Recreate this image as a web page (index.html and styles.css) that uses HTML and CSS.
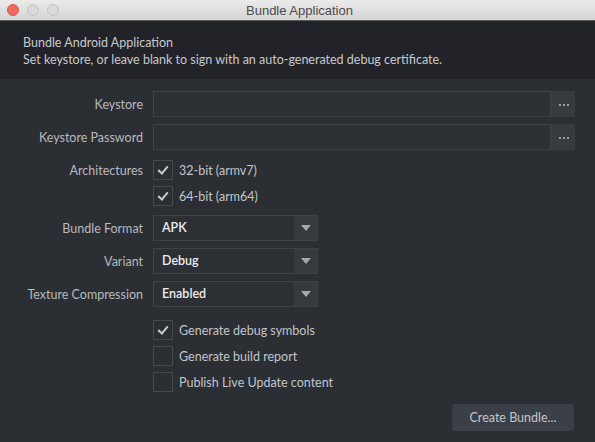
FILE: index.html
```html
<!DOCTYPE html>
<html lang="en">
<head>
    <meta charset="UTF-8">
    <meta name="viewport" content="width=device-width, initial-scale=1.0">
    <title>Bundle Application</title>
    <link rel="stylesheet" href="styles.css">
</head>
<body>

    <div class="window">
        <!-- Title bar -->
        <div class="titlebar">
            <div class="lights">
                <span class="light close"></span>
                <span class="light"></span>
                <span class="light"></span>
            </div>
            <div class="title">Bundle Application</div>
        </div>

        <!-- Header -->
        <div class="header">
            <div>Bundle Android Application</div>
            <div>Set keystore, or leave blank to sign with an auto-generated debug certificate.</div>
        </div>

        <!-- Form -->
        <div class="form">
            <div class="row">
                <label class="label">Keystore</label>
                <div class="file-field">
                    <input type="text" class="text-input">
                    <button class="browse"><i></i><i></i><i></i></button>
                </div>
            </div>
            <div class="row gap7">
                <label class="label">Keystore Password</label>
                <div class="file-field">
                    <input type="text" class="text-input">
                    <button class="browse"><i></i><i></i><i></i></button>
                </div>
            </div>

            <div class="row check-row gap10">
                <label class="label">Architectures</label>
                <div class="check"><span class="box checked"></span>32-bit (armv7)</div>
            </div>
            <div class="row check-row gap6">
                <label class="label"></label>
                <div class="check"><span class="box checked"></span>64-bit (arm64)</div>
            </div>

            <div class="row gap9">
                <label class="label">Bundle Format</label>
                <div class="select"><span class="value">APK</span><span class="arrow"></span></div>
            </div>
            <div class="row gap7">
                <label class="label">Variant</label>
                <div class="select"><span class="value">Debug</span><span class="arrow"></span></div>
            </div>
            <div class="row gap7">
                <label class="label">Texture Compression</label>
                <div class="select"><span class="value">Enabled</span><span class="arrow"></span></div>
            </div>

            <div class="row check-row gap13">
                <label class="label"></label>
                <div class="check"><span class="box checked"></span>Generate debug symbols</div>
            </div>
            <div class="row check-row gap6">
                <label class="label"></label>
                <div class="check"><span class="box"></span>Generate build report</div>
            </div>
            <div class="row check-row gap6">
                <label class="label"></label>
                <div class="check"><span class="box"></span>Publish Live Update content</div>
            </div>

            <div class="actions">
                <button class="create-button">Create Bundle...</button>
            </div>
        </div>
    </div>

</body>
</html>
```

FILE: styles.css
```css
body {
    margin: 0;
    font-family: Lato, "Open Sans", sans-serif;
    background: #2b2e33;
}
.window {
    width: 595px;
    height: 442px;
    background: #2b2e33;
    overflow: hidden;
}

/* title bar */
.titlebar {
    height: 20px;
    display: flex;
    align-items: center;
    justify-content: center;
    position: relative;
    background: linear-gradient(to bottom, #ebebeb, #d5d5d5);
    border-bottom: 1px solid #5a5a5a;
}
.lights {
    position: absolute;
    left: 7px;
    top: 4px;
    display: flex;
    gap: 8px;
}
.light {
    width: 10px;
    height: 10px;
    border-radius: 50%;
    background: #d9d9d9;
    border: 1px solid #c4c4c4;
}
.light.close {
    background: #ec6a5e;
    border-color: #d9574b;
}
.title {
    font-family: "Liberation Sans", Arial, sans-serif;
    font-size: 13px;
    color: #4a4a4a;
    padding-left: 4px;
}

/* header */
.header {
    height: 58px;
    box-sizing: border-box;
    padding: 13px 23px 0;
    background: #212328;
    color: #c6c9cd;
    font-size: 12.5px;
    line-height: 17px;
}

/* form */
.form {
    padding: 12px 20px 0 0;
}
.row {
    display: flex;
    align-items: center;
    height: 26px;
}
.check-row {
    height: 20px;
}
.gap6 { margin-top: 6px; }
.gap7 { margin-top: 7px; }
.gap9 { margin-top: 9px; }
.gap10 { margin-top: 10px; }
.gap13 { margin-top: 13px; }

.label {
    width: 143px;
    flex-shrink: 0;
    margin-right: 10px;
    text-align: right;
    color: #b7babe;
    font-size: 12.5px;
}

.file-field {
    flex: 1;
    display: flex;
    height: 26px;
}
.text-input {
    flex: 1;
    box-sizing: border-box;
    height: 26px;
    margin: 0;
    background: #2c2f34;
    border: 1px solid #404349;
    border-bottom-color: #3a3d42;
    outline: none;
}
.browse {
    width: 24px;
    height: 26px;
    padding: 0 0 0 1px;
    border: none;
    background: #373a3f;
    display: flex;
    align-items: center;
    justify-content: center;
    gap: 2px;
}
.browse i {
    width: 2px;
    height: 2px;
    background: #9a9da1;
    margin-top: 2px;
}

.select {
    width: 165px;
    height: 26px;
    box-sizing: border-box;
    display: flex;
    background: #2c2f34;
    border: 1px solid #3e4146;
}
.select .value {
    flex: 1;
    padding-left: 8px;
    line-height: 24px;
    color: #ececec;
    font-size: 12.5px;
    font-weight: 600;
}
.select .arrow {
    width: 23px;
    background: #363a3f;
    display: flex;
    align-items: center;
    justify-content: center;
}
.select .arrow::after {
    content: "";
    border-left: 5px solid transparent;
    border-right: 5px solid transparent;
    border-top: 6px solid #a4a7ab;
}

.check {
    display: flex;
    align-items: center;
    color: #c2c5c9;
    font-size: 12.5px;
}
.box {
    width: 20px;
    height: 20px;
    box-sizing: border-box;
    border: 1px solid #45484d;
    margin-right: 6px;
    position: relative;
}
.box.checked::after {
    content: "";
    position: absolute;
    left: 6px;
    top: 3px;
    width: 4px;
    height: 8px;
    border-right: 2px solid #c8cacd;
    border-bottom: 2px solid #c8cacd;
    transform: rotate(40deg);
}

.actions {
    display: flex;
    justify-content: flex-end;
    margin-top: 12px;
    padding-right: 1px;
}
.create-button {
    width: 122px;
    height: 27px;
    border: none;
    border-radius: 3px;
    background: #3b3f47;
    color: #c3c6ca;
    font-family: Lato, "Open Sans", sans-serif;
    font-size: 12.5px;
}
```
